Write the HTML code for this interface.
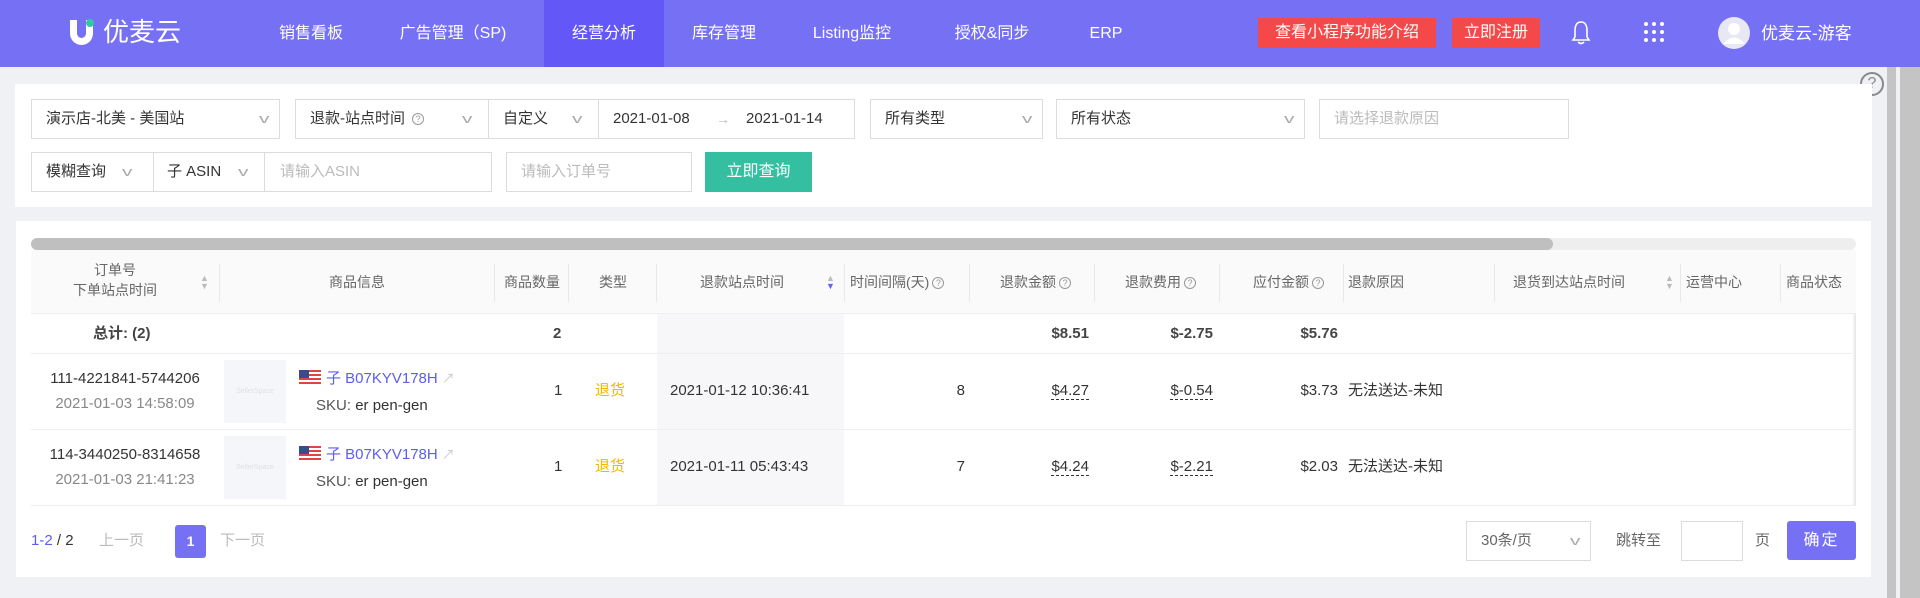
<!DOCTYPE html>
<html><head><meta charset="utf-8"><style>
*{box-sizing:border-box;margin:0;padding:0}
body{width:1920px;height:598px;background:#f0f1f5;font-family:"Liberation Sans","Noto Sans CJK SC",sans-serif;position:relative;overflow:hidden;color:#333}
.a{position:absolute}
.nav{left:0;top:0;width:1920px;height:67px;background:#7670f5}
.ni{top:0;height:67px;line-height:67px;color:#fff;font-size:16px;text-align:center}
.card{background:#fff}
.inp{border:1px solid #dcdcdc;height:40px;line-height:38px;font-size:15px;padding-left:14px;background:#fff;color:#333}
.ph{color:#bbb}
.chev{position:absolute;right:12px;top:0;color:#aaa;font-size:13px;transform:scaleX(1.6)}
.th{font-size:14px;color:#666;text-align:center;line-height:20px}
.dv{top:264px;width:1px;height:38px;background:#e8e8e8}
.td{font-size:15px;color:#333;line-height:20px}
.q{display:inline-block;width:12px;height:12px;border:1px solid #999;border-radius:50%;font-size:9px;line-height:10px;text-align:center;color:#999;vertical-align:1px;margin-left:3px}
.dash{border-bottom:1px dashed #333}
.sort{font-size:9px;line-height:8px;color:#bbb;text-align:center}
</style></head><body>
<div class="a nav"></div>
<div class="a" style="left:70px;top:20px;width:23px;height:25px;border:7px solid #fff;border-top:none;border-radius:0 0 12px 12px"></div>
<div class="a" style="left:86px;top:19px;width:8px;height:8px;border-radius:50%;background:#33c7a2"></div>
<div class="a" style="left:103px;top:14px;color:#fff;font-size:26px;line-height:36px">优麦云</div>
<div class="a" style="left:544px;top:0;width:120px;height:67px;background:#6358f7"></div>
<div class="a ni" style="left:261px;width:100px">销售看板</div>
<div class="a ni" style="left:383px;width:140px">广告管理（SP)</div>
<div class="a ni" style="left:554px;width:100px">经营分析</div>
<div class="a ni" style="left:674px;width:100px">库存管理</div>
<div class="a ni" style="left:792px;width:120px">Listing监控</div>
<div class="a ni" style="left:942px;width:100px">授权&amp;同步</div>
<div class="a ni" style="left:1076px;width:60px">ERP</div>
<div class="a" style="left:1258px;top:18px;width:178px;height:30px;background:#f54848;color:#fff;font-size:16px;line-height:30px;text-align:center">查看小程序功能介绍</div>
<div class="a" style="left:1452px;top:18px;width:88px;height:30px;background:#f54848;color:#fff;font-size:16px;line-height:30px;text-align:center">立即注册</div>
<svg class="a" style="left:1570px;top:20px" width="22" height="26" viewBox="0 0 22 26"><path d="M11 2 C6 2 5 7 5 11 L5 17 L3 20 L19 20 L17 17 L17 11 C17 7 16 2 11 2Z M8 22 Q11 25 14 22" fill="none" stroke="#fff" stroke-width="1.6"/></svg>
<svg class="a" style="left:1643px;top:21px" width="22" height="22"><g fill="#fff"><circle cx="3" cy="3" r="2"/><circle cx="11" cy="3" r="2"/><circle cx="19" cy="3" r="2"/><circle cx="3" cy="11" r="2"/><circle cx="11" cy="11" r="2"/><circle cx="19" cy="11" r="2"/><circle cx="3" cy="19" r="2"/><circle cx="11" cy="19" r="2"/><circle cx="19" cy="19" r="2"/></g></svg>
<svg class="a" style="left:1718px;top:17px" width="32" height="32"><circle cx="16" cy="16" r="16" fill="#e8e8f5"/><circle cx="16" cy="12" r="6" fill="#fff"/><path d="M5 27 Q16 14 27 27" fill="#fff"/></svg>
<div class="a" style="left:1761px;top:0;line-height:67px;color:#fff;font-size:17px">优麦云-游客</div>
<div class="a" style="left:1887px;top:67px;width:9px;height:531px;background:#c4c4c4"></div>
<div class="a" style="left:1900px;top:67px;width:20px;height:531px;background:#c4c4c4"></div>
<div class="a" style="left:1860px;top:72px;width:24px;height:24px;border:2px solid #888;border-radius:50%;color:#888;font-size:16px;line-height:20px;text-align:center">?</div>
<div class="a card" style="left:15px;top:84px;width:1857px;height:123px"></div>
<div class="a inp" style="left:31px;top:99px;width:249px">演示店-北美 - 美国站<span class="chev">v</span></div>
<div class="a inp" style="left:295px;top:99px;width:560px">退款-站点时间 <span class="q">?</span></div>
<div class="a" style="left:464px;top:99px;line-height:40px;color:#aaa;font-size:13px;transform:scaleX(1.6)">v</div>
<div class="a" style="left:488px;top:100px;width:1px;height:38px;background:#dcdcdc"></div>
<div class="a" style="left:503px;top:99px;line-height:40px;font-size:15px">自定义</div>
<div class="a" style="left:574px;top:99px;line-height:40px;color:#aaa;font-size:13px;transform:scaleX(1.6)">v</div>
<div class="a" style="left:598px;top:100px;width:1px;height:38px;background:#dcdcdc"></div>
<div class="a" style="left:613px;top:99px;line-height:40px;font-size:15px">2021-01-08</div>
<div class="a" style="left:716px;top:99px;line-height:40px;font-size:14px;color:#bbb">→</div>
<div class="a" style="left:746px;top:99px;line-height:40px;font-size:15px">2021-01-14</div>
<div class="a inp" style="left:870px;top:99px;width:173px">所有类型<span class="chev">v</span></div>
<div class="a inp" style="left:1056px;top:99px;width:249px">所有状态<span class="chev">v</span></div>
<div class="a inp ph" style="left:1319px;top:99px;width:250px">请选择退款原因</div>
<div class="a inp" style="left:31px;top:152px;width:461px"></div>
<div class="a" style="left:46px;top:152px;line-height:40px;font-size:15px">模糊查询</div>
<div class="a" style="left:124px;top:152px;line-height:40px;color:#aaa;font-size:13px;transform:scaleX(1.6)">v</div>
<div class="a" style="left:153px;top:153px;width:1px;height:38px;background:#dcdcdc"></div>
<div class="a" style="left:167px;top:152px;line-height:40px;font-size:15px">子 ASIN</div>
<div class="a" style="left:240px;top:152px;line-height:40px;color:#aaa;font-size:13px;transform:scaleX(1.6)">v</div>
<div class="a" style="left:264px;top:153px;width:1px;height:38px;background:#dcdcdc"></div>
<div class="a ph" style="left:280px;top:152px;line-height:40px;font-size:15px">请输入ASIN</div>
<div class="a inp ph" style="left:506px;top:152px;width:186px">请输入订单号</div>
<div class="a" style="left:705px;top:152px;width:107px;height:40px;background:#33bfa0;color:#fff;font-size:16px;line-height:40px;text-align:center">立即查询</div>
<div class="a card" style="left:16px;top:221px;width:1855px;height:356px"></div>
<div class="a" style="left:31px;top:238px;width:1825px;height:12px;background:#eee;border-radius:6px"></div>
<div class="a" style="left:31px;top:238px;width:1522px;height:12px;background:#bfbfbf;border-radius:6px"></div>
<div class="a" style="left:31px;top:250px;width:1825px;height:64px;background:#fafafa;border-bottom:1px solid #eee"></div>
<div class="a" style="left:657px;top:314px;width:187px;height:191px;background:#f7f7f9"></div>
<div class="a" style="left:31px;top:353px;width:1825px;height:1px;background:#eee"></div>
<div class="a" style="left:31px;top:429px;width:1825px;height:1px;background:#eee"></div>
<div class="a" style="left:31px;top:505px;width:1825px;height:1px;background:#eee"></div>
<div class="a" style="left:1852px;top:314px;width:4px;height:191px;background:linear-gradient(90deg,#fff,#e4e4e4)"></div>
<div class="a th" style="left:50px;top:260px;width:130px">订单号<br>下单站点时间</div>
<div class="a sort" style="left:200px;top:274px">▲<br>▼</div>
<div class="a dv" style="left:219px"></div>
<div class="a th" style="left:219px;top:272px;width:276px">商品信息</div>
<div class="a dv" style="left:494px"></div>
<div class="a th" style="left:495px;top:272px;width:74px">商品数量</div>
<div class="a dv" style="left:568px"></div>
<div class="a th" style="left:569px;top:272px;width:88px">类型</div>
<div class="a dv" style="left:656px"></div>
<div class="a th" style="left:657px;top:272px;width:170px">退款站点时间</div>
<div class="a sort" style="left:826px;top:274px">▲<br><span style="color:#6a5ff5">▼</span></div>
<div class="a dv" style="left:844px"></div>
<div class="a th" style="left:850px;top:272px;text-align:left">时间间隔(天)<span class="q">?</span></div>
<div class="a dv" style="left:969px"></div>
<div class="a th" style="left:1000px;top:272px;text-align:left">退款金额<span class="q">?</span></div>
<div class="a dv" style="left:1094px"></div>
<div class="a th" style="left:1125px;top:272px;text-align:left">退款费用<span class="q">?</span></div>
<div class="a dv" style="left:1219px"></div>
<div class="a th" style="left:1253px;top:272px;text-align:left">应付金额<span class="q">?</span></div>
<div class="a dv" style="left:1343px"></div>
<div class="a th" style="left:1348px;top:272px;text-align:left">退款原因</div>
<div class="a dv" style="left:1494px"></div>
<div class="a th" style="left:1513px;top:272px;text-align:left">退货到达站点时间</div>
<div class="a sort" style="left:1665px;top:274px">▲<br>▼</div>
<div class="a dv" style="left:1680px"></div>
<div class="a th" style="left:1686px;top:272px;text-align:left">运营中心</div>
<div class="a dv" style="left:1780px"></div>
<div class="a th" style="left:1786px;top:272px;text-align:left">商品状态</div>
<div class="a td" style="left:93px;top:324px;font-weight:bold;color:#444">总计: (2)</div>
<div class="a td" style="left:553px;top:324px;font-weight:bold;color:#444">2</div>
<div class="a td" style="left:970px;top:324px;width:119px;text-align:right;font-weight:bold;color:#444">$8.51</div>
<div class="a td" style="left:1094px;top:324px;width:119px;text-align:right;font-weight:bold;color:#444">$-2.75</div>
<div class="a td" style="left:1220px;top:324px;width:118px;text-align:right;font-weight:bold;color:#444">$5.76</div>
<div class="a td" style="left:31px;top:369px;width:188px;text-align:center">111-4221841-5744206</div>
<div class="a td" style="left:31px;top:394px;width:188px;text-align:center;color:#888">2021-01-03 14:58:09</div>
<div class="a" style="left:224px;top:360px;width:62px;height:63px;background:#f5f6fa;font-size:7px;color:#e0e0e0;text-align:center;line-height:63px">SellerSpace</div>
<div class="a" style="left:299px;top:370px;width:22px;height:15px;background:repeating-linear-gradient(#d44 0 2px,#fff 2px 4px)"></div>
<div class="a" style="left:299px;top:370px;width:10px;height:8px;background:#3a4a8a"></div>
<div class="a" style="left:326px;top:369px;font-size:15px;line-height:20px;color:#5b5ef0">子 B07KYV178H <span style="color:#ccc;font-size:13px">↗</span></div>
<div class="a td" style="left:316px;top:396px;color:#555">SKU: <span style="color:#333">er pen-gen</span></div>
<div class="a td" style="left:554px;top:381px">1</div>
<div class="a td" style="left:595px;top:381px;color:#f7b500">退货</div>
<div class="a td" style="left:670px;top:381px">2021-01-12 10:36:41</div>
<div class="a td" style="left:900px;top:381px;width:65px;text-align:right">8</div>
<div class="a td" style="left:970px;top:381px;width:119px;text-align:right"><span class="dash">$4.27</span></div>
<div class="a td" style="left:1094px;top:381px;width:119px;text-align:right"><span class="dash">$-0.54</span></div>
<div class="a td" style="left:1220px;top:381px;width:118px;text-align:right">$3.73</div>
<div class="a td" style="left:1348px;top:381px">无法送达-未知</div>
<div class="a td" style="left:31px;top:445px;width:188px;text-align:center">114-3440250-8314658</div>
<div class="a td" style="left:31px;top:470px;width:188px;text-align:center;color:#888">2021-01-03 21:41:23</div>
<div class="a" style="left:224px;top:436px;width:62px;height:63px;background:#f5f6fa;font-size:7px;color:#e0e0e0;text-align:center;line-height:63px">SellerSpace</div>
<div class="a" style="left:299px;top:446px;width:22px;height:15px;background:repeating-linear-gradient(#d44 0 2px,#fff 2px 4px)"></div>
<div class="a" style="left:299px;top:446px;width:10px;height:8px;background:#3a4a8a"></div>
<div class="a" style="left:326px;top:445px;font-size:15px;line-height:20px;color:#5b5ef0">子 B07KYV178H <span style="color:#ccc;font-size:13px">↗</span></div>
<div class="a td" style="left:316px;top:472px;color:#555">SKU: <span style="color:#333">er pen-gen</span></div>
<div class="a td" style="left:554px;top:457px">1</div>
<div class="a td" style="left:595px;top:457px;color:#f7b500">退货</div>
<div class="a td" style="left:670px;top:457px">2021-01-11 05:43:43</div>
<div class="a td" style="left:900px;top:457px;width:65px;text-align:right">7</div>
<div class="a td" style="left:970px;top:457px;width:119px;text-align:right"><span class="dash">$4.24</span></div>
<div class="a td" style="left:1094px;top:457px;width:119px;text-align:right"><span class="dash">$-2.21</span></div>
<div class="a td" style="left:1220px;top:457px;width:118px;text-align:right">$2.03</div>
<div class="a td" style="left:1348px;top:457px">无法送达-未知</div>
<div class="a td" style="left:31px;top:531px"><span style="color:#5b5ef0">1-2</span> / 2</div>
<div class="a td" style="left:99px;top:531px;color:#bbb">上一页</div>
<div class="a" style="left:175px;top:525px;width:31px;height:33px;background:#7670f5;border-radius:3px;color:#fff;font-size:14px;line-height:33px;text-align:center;font-weight:bold">1</div>
<div class="a td" style="left:220px;top:531px;color:#bbb">下一页</div>
<div class="a inp" style="left:1466px;top:521px;width:125px;color:#666">30条/页<span class="chev">v</span></div>
<div class="a td" style="left:1616px;top:531px;color:#666">跳转至</div>
<div class="a inp" style="left:1681px;top:521px;width:62px"></div>
<div class="a td" style="left:1755px;top:531px;color:#666">页</div>
<div class="a" style="left:1787px;top:521px;width:69px;height:39px;background:#7670f5;border-radius:3px;color:#fff;font-size:16px;line-height:39px;text-align:center;letter-spacing:2px">确定</div>
</body></html>
